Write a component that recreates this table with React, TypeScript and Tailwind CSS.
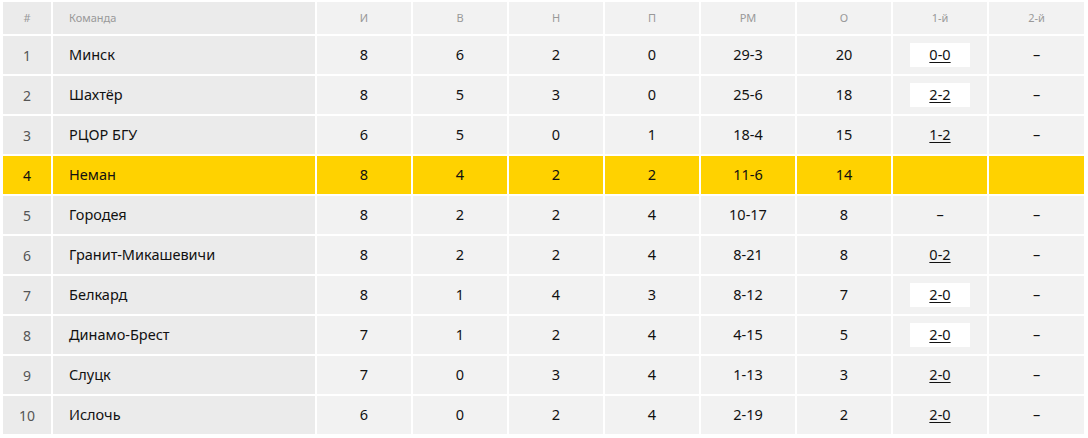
const headers = ["И", "В", "Н", "П", "РМ", "О", "1-й", "2-й"];

type Row = {
  pos: number;
  team: string;
  stats: string[];
  first: string;
  firstBox?: boolean;
  second: string;
  active?: boolean;
};

const rows: Row[] = [
  { pos: 1, team: "Минск", stats: ["8", "6", "2", "0", "29-3", "20"], first: "0-0", firstBox: true, second: "–" },
  { pos: 2, team: "Шахтёр", stats: ["8", "5", "3", "0", "25-6", "18"], first: "2-2", firstBox: true, second: "–" },
  { pos: 3, team: "РЦОР БГУ", stats: ["6", "5", "0", "1", "18-4", "15"], first: "1-2", second: "–" },
  { pos: 4, team: "Неман", stats: ["8", "4", "2", "2", "11-6", "14"], first: "", second: "", active: true },
  { pos: 5, team: "Городея", stats: ["8", "2", "2", "4", "10-17", "8"], first: "–", second: "–" },
  { pos: 6, team: "Гранит-Микашевичи", stats: ["8", "2", "2", "4", "8-21", "8"], first: "0-2", second: "–" },
  { pos: 7, team: "Белкард", stats: ["8", "1", "4", "3", "8-12", "7"], first: "2-0", firstBox: true, second: "–" },
  { pos: 8, team: "Динамо-Брест", stats: ["7", "1", "2", "4", "4-15", "5"], first: "2-0", firstBox: true, second: "–" },
  { pos: 9, team: "Слуцк", stats: ["7", "0", "3", "4", "1-13", "3"], first: "2-0", second: "–" },
  { pos: 10, team: "Ислочь", stats: ["6", "0", "2", "4", "2-19", "2"], first: "2-0", second: "–" },
];

const ScoreCell = ({ value, box }: { value: string; box?: boolean }) => {
  if (value === "" || value === "–") {
    return <span>{value}</span>;
  }
  return (
    <span className={`flex h-6 w-[60px] items-center justify-center underline underline-offset-2 ${box ? "bg-white" : ""}`}>
      {value}
    </span>
  );
};

export default function App() {
  return (
    <div className="bg-white pl-[3px] pt-[2px] font-['Noto_Sans',sans-serif]">
      <div className="grid w-[1081px] grid-cols-[48px_262px_repeat(7,94px)_95px] gap-[2px]">
        <div className="flex h-8 items-center justify-center bg-[#ebebeb] text-[11px] text-[#999]">#</div>
        <div className="flex h-8 items-center bg-[#ebebeb] pl-[16px] text-[11px] text-[#999]">Команда</div>
        {headers.map((h) => (
          <div key={h} className="flex h-8 items-center justify-center bg-[#f2f2f2] text-[11px] text-[#999]">
            {h}
          </div>
        ))}

        {rows.map((r) => {
          const dark = r.active ? "bg-[#ffd200]" : "bg-[#ebebeb]";
          const light = r.active ? "bg-[#ffd200]" : "bg-[#f2f2f2]";
          return (
            <div key={r.pos} className="contents text-[14.5px] text-[#111]">
              <div className={`flex h-[38px] items-center justify-center text-[14px] ${r.active ? "text-[#111]" : "text-[#555]"} ${dark}`}>
                {r.pos}
              </div>
              <div className={`flex h-[38px] items-center pl-[16px] ${dark}`}>{r.team}</div>
              {r.stats.map((s, i) => (
                <div key={i} className={`flex h-[38px] items-center justify-center ${light}`}>
                  {s}
                </div>
              ))}
              <div className={`flex h-[38px] items-center justify-center ${light}`}>
                <ScoreCell value={r.first} box={r.firstBox} />
              </div>
              <div className={`flex h-[38px] items-center justify-center ${light}`}>{r.second}</div>
            </div>
          );
        })}
      </div>
    </div>
  );
}
